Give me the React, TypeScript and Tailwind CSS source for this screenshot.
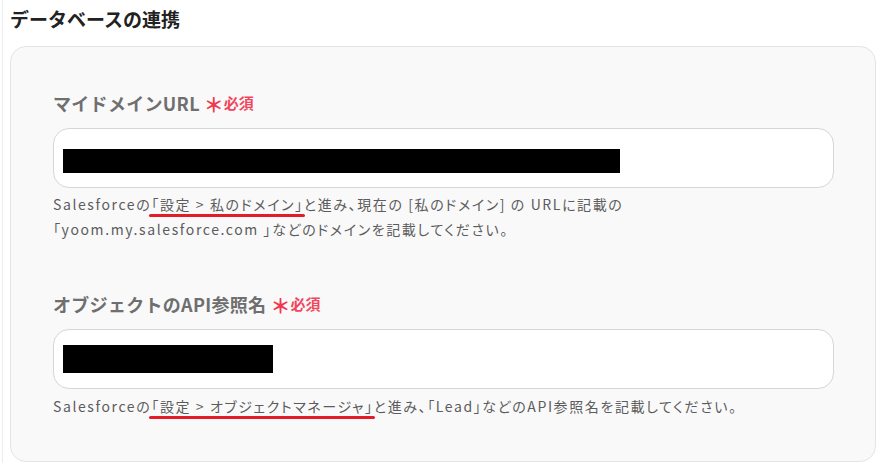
import React from "react";

const font = { fontFamily: '"Noto Sans CJK JP", "Noto Sans", sans-serif' };

function Marked({ children }: { children: React.ReactNode }) {
  return (
    <span className="relative">
      {children}
      <span className="absolute left-[-2px] right-[-1px] bottom-[-3px] h-[3px] rounded-full bg-[#e31c27]" />
    </span>
  );
}

function Label({ text }: { text: string }) {
  return (
    <div className="flex items-center h-[24px]">
      <span className="text-[18px] font-bold text-[#6f6f6f] leading-[24px] tracking-[0.3px]">{text}</span>
      <span className="ml-[4px] text-[20px] font-bold text-[#f0374f] leading-[24px] mt-[4px]">＊</span>
      <span className="ml-[0px] text-[15px] font-bold text-[#f0475c] leading-[24px]">必須</span>
    </div>
  );
}

function Field({ bar, barTop, barH }: { bar: number; barTop: number; barH: number }) {
  return (
    <div className="h-[60px] w-[781px] rounded-[16px] border border-[#d3d6dd] bg-white relative">
      <div className="absolute left-[9px] bg-black" style={{ top: barTop, height: barH, width: bar }} />
    </div>
  );
}

export default function App() {
  return (
    <div className="w-[892px] h-[463px] bg-white overflow-hidden flex" style={font}>
      <div className="w-[3px] border-r border-[#ececec] shrink-0" />
      <div className="pl-[7px] flex flex-col">
        <h2 className="text-[19px] font-bold text-[#222] leading-[24px] mt-[7px]">データベースの連携</h2>
        <div className="mt-[15px] w-[866px] h-[416px] rounded-[16px] border border-[#e3e4e8] bg-[#f9f9fa] pl-[42px] pt-[44px]">
          <Label text="マイドメインURL" />
          <div className="mt-[13px]">
            <Field bar={557} barTop={20} barH={24} />
          </div>
          <p className="mt-[4px] text-[14px] leading-[25px] text-[#5c5c5c] tracking-[1.6px] [font-feature-settings:'palt']">
            Salesforceの<Marked>「設定 &gt; 私のドメイン」</Marked>と進み、現在の [私のドメイン] の URLに記載の
            <br />
            「yoom.my.salesforce.com 」などのドメインを記載してください。
          </p>
          <div className="mt-[50px]">
            <Label text="オブジェクトのAPI参照名" />
          </div>
          <div className="mt-[13px]">
            <Field bar={210} barTop={15} barH={28} />
          </div>
          <p className="mt-[5px] text-[14px] leading-[25px] text-[#5c5c5c] tracking-[1.6px] [font-feature-settings:'palt']">
            Salesforceの<Marked>「設定 &gt; オブジェクトマネージャ」</Marked>と進み、「Lead」などのAPI参照名を記載してください。
          </p>
        </div>
      </div>
    </div>
  );
}
